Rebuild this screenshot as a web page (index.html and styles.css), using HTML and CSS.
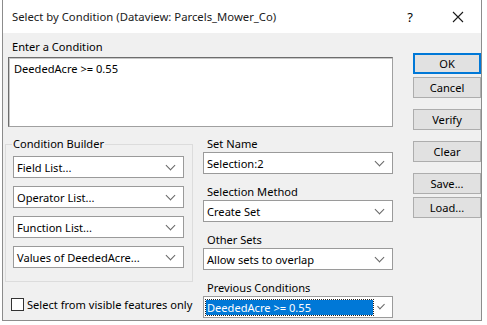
FILE: index.html
```html
<!DOCTYPE html>
<html>
<head>
    <title>Select by Condition</title>
    <meta charset="UTF-8">
    <link rel="stylesheet" href="styles.css">
</head>
<body>
    <div class="dialog">
        <div class="titlebar">
            <span class="title">Select by Condition (Dataview: Parcels_Mower_Co)</span>
            <span class="title-help">?</span>
            <span class="title-close">
                <svg width="12" height="12" viewBox="0 0 12 12"><path d="M1 1 L11 11 M11 1 L1 11" stroke="#1a1a1a" stroke-width="1.1" fill="none"/></svg>
            </span>
        </div>

        <div class="content">
            <div class="main">
                <div class="label cond-label">Enter a Condition</div>
                <div class="condition">DeededAcre &gt;= 0.55</div>

                <div class="lower">
                    <div class="left-col">
                        <fieldset class="group">
                            <legend>Condition Builder</legend>
                            <div class="combo"><span>Field List...</span><i class="arrow"></i></div>
                            <div class="combo"><span>Operator List...</span><i class="arrow"></i></div>
                            <div class="combo"><span>Function List...</span><i class="arrow"></i></div>
                            <div class="combo"><span>Values of DeededAcre...</span><i class="arrow"></i></div>
                        </fieldset>
                        <label class="check-row">
                            <span class="checkbox"></span>
                            <span>Select from visible features only</span>
                        </label>
                    </div>

                    <div class="right-col">
                        <div class="field">
                            <div class="label">Set Name</div>
                            <div class="combo"><span>Selection:2</span><i class="arrow"></i></div>
                        </div>
                        <div class="field">
                            <div class="label">Selection Method</div>
                            <div class="combo"><span>Create Set</span><i class="arrow"></i></div>
                        </div>
                        <div class="field">
                            <div class="label">Other Sets</div>
                            <div class="combo"><span>Allow sets to overlap</span><i class="arrow"></i></div>
                        </div>
                        <div class="field">
                            <div class="label">Previous Conditions</div>
                            <div class="combo focused"><span class="selected">DeededAcre &gt;= 0.55</span><i class="arrow"></i></div>
                        </div>
                    </div>
                </div>
            </div>

            <div class="buttons">
                <button class="btn default">OK</button>
                <button class="btn gap-s">Cancel</button>
                <button class="btn gap-l">Verify</button>
                <button class="btn gap-l">Clear</button>
                <button class="btn gap-l">Save...</button>
                <button class="btn gap-s">Load...</button>
            </div>
        </div>
    </div>
</body>
</html>
```

FILE: styles.css
```css
body {
    margin: 0;
    background: #ffffff;
    font-family: "Noto Sans", "Open Sans", sans-serif;
    font-size: 11.1px;
    color: #000;
}
.dialog {
    margin-left: 2px;
    width: 478px;
    height: 320px;
    border: 1px solid #8c8c8c;
    border-top: none;
    background: #f0f0f0;
    display: flex;
    flex-direction: column;
}
.titlebar {
    height: 33px;
    background: #fff;
    display: flex;
    align-items: center;
    padding-left: 9px;
    flex-shrink: 0;
}
.title { flex: 1; font-size: 11.3px; color: #1a1a1a; }
.title-help { width: 46px; text-align: center; font-size: 13px; margin-right: 2px; }
.title-close { width: 46px; display: flex; justify-content: center; }

.content {
    display: flex;
    flex: 1;
}
.main {
    width: 388px;
    padding-left: 2px;
}
.label { line-height: 16px; padding-left: 4px; white-space: nowrap; }
.cond-label { margin-top: 6px; padding-left: 7px; }
.condition {
    margin: 2px 0 0 3px;
    height: 70px;
    box-sizing: border-box;
    background: #fff;
    border: 1px solid #a0a0a0;
    border-top-color: #6d6d6d;
    border-left-color: #6d6d6d;
    box-shadow: inset 1px 1px 0 #c8c8c8;
    padding: 3px 5px;
}
.lower {
    display: flex;
    gap: 10px;
    margin-top: 9px;
}
.left-col { width: 188px; }
.right-col { width: 190px; }

.group {
    margin: 0;
    border: 1px solid #dcdcdc;
    padding: 4px 8px 13px 7px;
    display: flex;
    flex-direction: column;
    gap: 8px;
}
.group legend {
    padding: 0 1px;
    margin-left: -1px;
    line-height: 16px;
}
.combo {
    height: 22px;
    box-sizing: border-box;
    background: #fff;
    border: 1px solid #9a9a9a;
    display: flex;
    align-items: center;
    padding-left: 3px;
    position: relative;
}
.combo span { flex: 1; white-space: nowrap; }
.arrow {
    width: 6px;
    height: 6px;
    border-right: 1px solid #666;
    border-bottom: 1px solid #666;
    transform: rotate(45deg);
    margin: -4px 9px 0 0;
}
.field { margin-bottom: 10px; }
.combo.focused { padding-left: 2px; }
.combo .selected {
    flex: 0 0 166px;
    background: #0078d7;
    color: #fff;
    line-height: 15px;
    outline: 1px dotted #222;
    padding-left: 1px;
    margin-right: 6px;
}

.check-row {
    display: flex;
    align-items: center;
    gap: 3px;
    margin: 15px 0 0 6px;
    white-space: nowrap;
}
.checkbox {
    flex-shrink: 0;
    width: 11px;
    height: 11px;
    border: 1px solid #333;
    background: #fff;
}

.buttons {
    display: flex;
    flex-direction: column;
    margin-left: 20px;
    padding-top: 20px;
    width: 68px;
}
.btn {
    height: 21px;
    border: 1px solid #adadad;
    background: #e1e1e1;
    font-family: inherit;
    font-size: 11.1px;
    padding: 0;
}
.btn.default { border: 2px solid #0078d7; }
.gap-s { margin-top: 3px; }
.gap-l { margin-top: 11px; }
```
